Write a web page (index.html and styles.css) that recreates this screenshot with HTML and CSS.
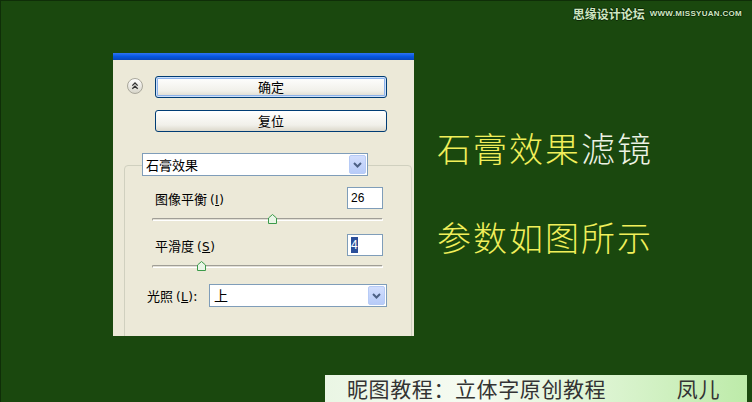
FILE: index.html
```html
<!DOCTYPE html>
<html lang="zh-CN">
<head>
  <meta charset="UTF-8" />
  <title>石膏效果滤镜</title>
  <link rel="stylesheet" href="styles.css">
</head>
<body>
  <div class="page">
    <div class="watermark"><span class="wm-cn">思缘设计论坛</span><span class="wm-url">WWW.MISSYUAN.COM</span></div>

    <div class="stage">
      <div class="dialog">
        <div class="titlebar"></div>

        <div class="actions">
          <span class="collapse">
            <svg width="16" height="16" viewBox="0 0 16 16">
              <defs>
                <linearGradient id="cg" x1="0" y1="0" x2="0" y2="1">
                  <stop offset="0" stop-color="#ffffff"/>
                  <stop offset="1" stop-color="#d6d4c8"/>
                </linearGradient>
              </defs>
              <circle cx="8" cy="8" r="7.5" fill="url(#cg)" stroke="#a9a79b"/>
              <path d="M5.3 7.6 L8 5 L10.7 7.6 M5.3 10.8 L8 8.2 L10.7 10.8" fill="none" stroke="#333" stroke-width="1.3"/>
            </svg>
          </span>
          <div class="buttons">
            <button class="btn btn-default">确定</button>
            <button class="btn">复位</button>
          </div>
        </div>

        <div class="group">
          <div class="select filter-select">
            <span class="select-value">石膏效果</span>
            <span class="select-arrow">
              <svg width="15" height="17" viewBox="0 0 15 17"><path d="M4 7 L7.5 10.5 L11 7" fill="none" stroke="#4d6185" stroke-width="2"/></svg>
            </span>
          </div>

          <div class="field">
            <span class="label">图像平衡 <span class="key">(<u>I</u>)</span></span>
            <span class="num">26</span>
          </div>
          <div class="slider">
            <span class="track"></span>
            <span class="thumb" style="left: 52%">
              <svg width="9" height="10" viewBox="0 0 9 10"><path d="M0.5 4 L4.5 0.5 L8.5 4 L8.5 9.5 L0.5 9.5 Z" fill="#e9f5e6" stroke="#3b9a4a"/></svg>
            </span>
          </div>

          <div class="field field-2">
            <span class="label">平滑度 <span class="key">(<u>S</u>)</span></span>
            <span class="num"><span class="selected">4</span></span>
          </div>
          <div class="slider">
            <span class="track"></span>
            <span class="thumb" style="left: 21%">
              <svg width="9" height="10" viewBox="0 0 9 10"><path d="M0.5 4 L4.5 0.5 L8.5 4 L8.5 9.5 L0.5 9.5 Z" fill="#e9f5e6" stroke="#3b9a4a"/></svg>
            </span>
          </div>

          <div class="light-row">
            <span class="label">光照 <span class="key">(<u>L</u>)</span>:</span>
            <div class="select light-select">
              <span class="select-value">上</span>
              <span class="select-arrow">
                <svg width="15" height="17" viewBox="0 0 15 17"><path d="M4 7 L7.5 10.5 L11 7" fill="none" stroke="#4d6185" stroke-width="2"/></svg>
              </span>
            </div>
          </div>
        </div>
      </div>

      <div class="caption">
        <p><span class="yellow">石膏效果</span><span class="white">滤镜</span></p>
        <p class="yellow">参数如图所示</p>
      </div>
    </div>

    <div class="banner">
      <span>昵图教程：立体字原创教程</span>
      <span>凤儿</span>
    </div>
  </div>
</body>
</html>
```

FILE: styles.css
```css
* {
  box-sizing: border-box;
}

body {
  margin: 0;
  background: #1a480e;
  font-family: "Noto Sans CJK SC", "Liberation Sans", sans-serif;
}

.page {
  position: relative;
  width: 752px;
  height: 402px;
  overflow: hidden;
  background: #1a480e;
  border-top: 1px solid #0f2e08;
  border-left: 1px solid #0f2e08;
}

/* watermark over the corner */
.watermark {
  position: absolute;
  top: 5px;
  right: 10px;
  display: flex;
  align-items: center;
  gap: 5px;
  color: #cfe6c2;
  text-shadow: 1px 0 0 #0d2a06, -1px 0 0 #0d2a06, 0 1px 0 #0d2a06, 0 -1px 0 #0d2a06;
}

.wm-cn {
  font-size: 12px;
  font-weight: 700;
  line-height: 16px;
}

.wm-url {
  font-family: "Liberation Sans", sans-serif;
  font-size: 8px;
  font-weight: 700;
  letter-spacing: 0.3px;
  line-height: 16px;
}

.stage {
  display: flex;
  padding: 52px 0 0 112px;
}

/* photoshop filter panel */
.dialog {
  width: 301px;
  height: 283px;
  background: #ece9d8;
  overflow: hidden;
  font-size: 13px;
  color: #000;
}

.titlebar {
  height: 7px;
  background: linear-gradient(#2f74f2, #0657e0 50%, #0a46b6);
}

.actions {
  display: flex;
  align-items: flex-start;
  padding: 16px 0 0 14px;
}

.collapse {
  display: block;
  width: 16px;
  height: 16px;
  margin-top: 2px;
}

.collapse svg {
  display: block;
}

.buttons {
  display: flex;
  flex-direction: column;
  gap: 12px;
  margin-left: 12px;
}

.btn {
  width: 232px;
  height: 22px;
  padding: 0;
  border: 1px solid #003c74;
  border-radius: 3px;
  background: linear-gradient(#ffffff, #f1f0ea 70%, #dcd8cb);
  font-family: "Noto Sans CJK SC", sans-serif;
  font-size: 13px;
  line-height: 20px;
  color: #000;
}

.btn-default {
  box-shadow: inset 0 0 0 1px #cde0fa, inset 0 0 0 2px #8db2ea;
}

.group {
  height: 240px;
  margin: 33px 2px 0 11px;
  border: 1px solid #d0d0bf;
  border-radius: 4px;
}

.select {
  display: flex;
  align-items: center;
  justify-content: space-between;
  height: 23px;
  background: #fff;
  border: 1px solid #7f9db9;
  padding: 1px;
}

.select-value {
  padding-left: 2px;
  line-height: 19px;
}

.select-arrow {
  display: flex;
  align-items: center;
  justify-content: center;
  width: 17px;
  height: 19px;
  border: 1px solid #b7cbf6;
  border-radius: 2px;
  background: linear-gradient(#d2defd, #b7cbf8);
}

.filter-select {
  width: 226px;
  margin: -13px 0 0 17px;
}

.field {
  display: flex;
  align-items: center;
  justify-content: space-between;
  height: 22px;
  margin-top: 11px;
  padding: 0 28px 0 30px;
}

.field-2 {
  margin-top: 9px;
}

.key {
  font-family: "DejaVu Sans", sans-serif;
  font-size: 12px;
  letter-spacing: 0.5px;
}

.num {
  width: 36px;
  height: 22px;
  background: #fff;
  border: 1px solid #7f9db9;
  padding-left: 3px;
  font-family: "Liberation Sans", sans-serif;
  font-size: 12px;
  line-height: 20px;
}

.selected {
  background: #2b4f9a;
  color: #fff;
  padding: 1px 0;
}

.slider {
  position: relative;
  height: 12px;
  margin: 4px 28px 0 27px;
}

.track {
  display: block;
  position: absolute;
  left: 0;
  right: 0;
  top: 5px;
  height: 3px;
  border-radius: 2px;
  border: 1px solid;
  border-color: #a09e96 #fff #fff #a09e96;
  background: #e2e0d6;
}

.thumb {
  position: absolute;
  top: 1px;
  margin-left: -4px;
}

.thumb svg {
  display: block;
}

.light-row {
  display: flex;
  align-items: center;
  justify-content: space-between;
  margin-top: 12px;
  padding: 0 24px 0 22px;
}

.light-select {
  flex: 0 0 178px;
}

.light-select .select-value {
  padding-left: 3px;
  font-size: 14px;
}

/* right hand caption */
.caption {
  margin-left: 23px;
  padding-top: 78px;
}

.caption p {
  margin: 0;
  font-size: 34px;
  font-weight: 300;
  line-height: 34px;
  letter-spacing: 2px;
}

.caption p + p {
  margin-top: 55px;
}

.yellow {
  color: #f1ef5a;
}

.white {
  color: #edf3e4;
}

.banner {
  display: flex;
  justify-content: space-between;
  width: 422px;
  height: 27px;
  margin: 39px 0 0 324px;
  padding: 0 27px 0 22px;
  background: linear-gradient(90deg, #eaf6e4 0%, #f6fbf2 35%, #d9f3cd 70%, #bdeba9 100%);
  font-size: 21px;
  line-height: 27px;
  letter-spacing: 0.6px;
  color: #333;
}
```
